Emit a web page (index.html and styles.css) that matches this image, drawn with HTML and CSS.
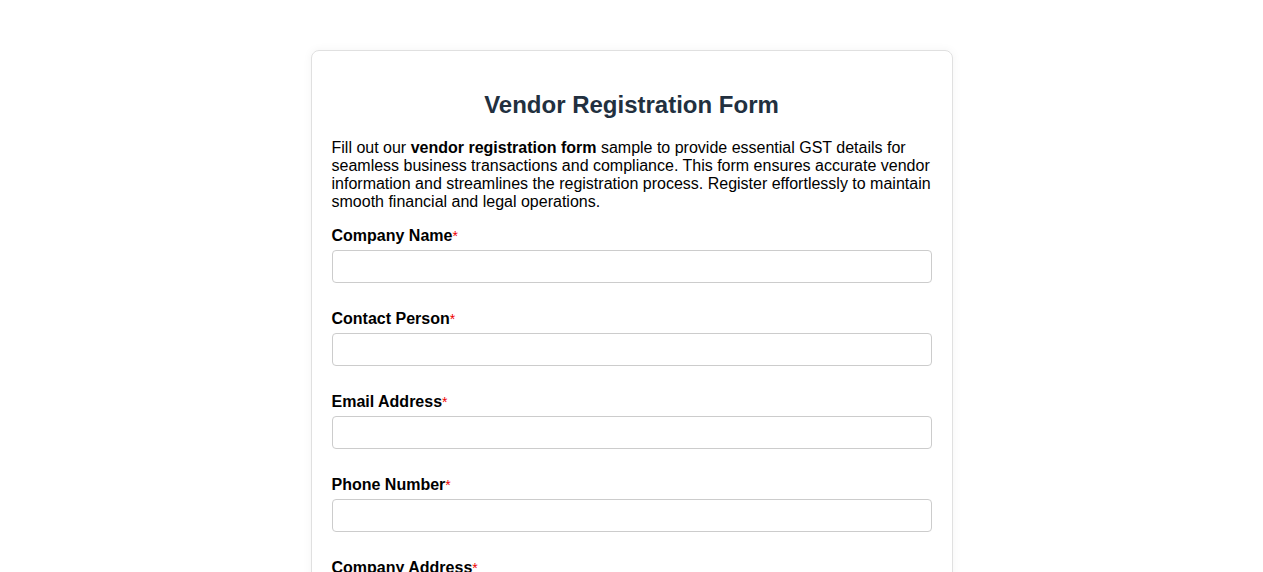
FILE: index.html
```html
<!DOCTYPE html>
<html lang="en">
<head>
    <meta charset="UTF-8">
    <meta name="viewport" content="width=device-width, initial-scale=1.0">
    <title>Vendor Registration Form</title>

    <link rel="stylesheet" href="styles.css">
</head>
<body>

    <div class="form-container">
        <h2>Vendor Registration Form</h2>
        <p class="intro">Fill out our <strong>vendor registration form</strong> sample to provide essential GST details for seamless business transactions and compliance. This form ensures accurate vendor information and streamlines the registration process. Register effortlessly to maintain smooth financial and legal operations.</p>

        <form>
            <div class="form-group">
                <label for="company">Company Name<span class="required">*</span></label>
                <input type="text" id="company" name="company">
            </div>
            <div class="form-group">
                <label for="contact">Contact Person<span class="required">*</span></label>
                <input type="text" id="contact" name="contact">
            </div>
            <div class="form-group">
                <label for="email">Email Address<span class="required">*</span></label>
                <input type="email" id="email" name="email">
            </div>
            <div class="form-group">
                <label for="phone">Phone Number<span class="required">*</span></label>
                <input type="tel" id="phone" name="phone">
            </div>
            <div class="form-group">
                <label for="address">Company Address<span class="required">*</span></label>
                <textarea id="address" name="address" rows="4"></textarea>
            </div>
            <div class="form-group">
                <label for="gst">GST Number<span class="required">*</span></label>
                <input type="text" id="gst" name="gst">
            </div>
            <button type="submit">Submit</button>
        </form>
    </div>

</body>
</html>
```

FILE: styles.css
```css
body {
    margin: 0;
    padding: 0;
    background: #fff;
    font-family: "Liberation Sans", Arial, sans-serif;
    color: #000;
}

.form-container {
    width: 600px;
    margin: 50px auto;
    padding: 20px;
    border: 1px solid #e0e0e0;
    border-radius: 8px;
    box-shadow: 0 0 10px rgba(0,0,0,0.05);
}

h2 {
    text-align: center;
    color: #22303f;
    font-size: 24px;
    margin: 0.83em 0;
}

.intro {
    font-size: 16px;
    line-height: 18px;
    margin: 16px 0;
}

.form-group {
    margin-bottom: 27px;
}

label {
    display: block;
    font-weight: bold;
    font-size: 16px;
    line-height: 18px;
    margin-bottom: 5px;
}

.required {
    color: #e00;
    font-weight: normal;
    font-size: 14px;
}

input,
textarea {
    display: block;
    box-sizing: border-box;
    width: 100%;
    height: 33px;
    padding: 8px;
    border: 1px solid #ccc;
    border-radius: 4px;
    font-family: inherit;
}

textarea {
    height: auto;
}

button {
    padding: 10px 20px;
    background: #22303f;
    color: #fff;
    border: none;
    border-radius: 4px;
    font-size: 16px;
}
```
